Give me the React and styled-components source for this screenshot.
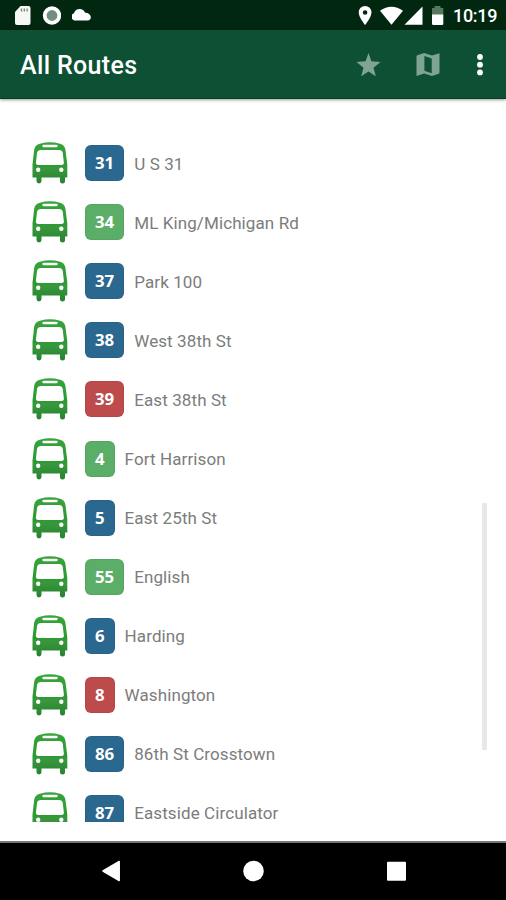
import React from "react";
import styled, { createGlobalStyle } from "styled-components";

const GlobalStyle = createGlobalStyle`
  * { box-sizing: border-box; }
  body { margin: 0; background: #fff; font-family: Roboto, sans-serif; }
  svg { display: block; flex: none; }
`;

const Screen = styled.div`
  width: 506px;
  height: 900px;
  display: flex;
  flex-direction: column;
  overflow: hidden;
  background: #fff;
`;

const StatusBar = styled.div`
  height: 30px;
  flex: none;
  display: flex;
  justify-content: space-between;
  padding: 6px 9px 0 14px;
  background: #022711;
  color: #fff;
`;

const StatusGroup = styled.div`
  display: flex;
  gap: ${(p) => p.$gap}px;
`;

const Clock = styled.time`
  width: 44px;
  font-size: 18px;
  line-height: 20px;
  font-weight: 500;
  letter-spacing: -0.3px;
  white-space: nowrap;
`;

const AppBar = styled.header`
  height: 69px;
  flex: none;
  display: flex;
  align-items: center;
  justify-content: space-between;
  padding: 0 21px 0 20px;
  background: #0e5034;
  border-bottom: 1px solid #0b3a20;
  box-shadow: 0 1px 3px rgba(0, 0, 0, 0.4);
  z-index: 1;
`;

const Title = styled.h1`
  margin: 3px 0 0;
  font-size: 25px;
  line-height: 30px;
  font-weight: 500;
  letter-spacing: 0.35px;
  color: #fff;
`;

const Actions = styled.div`
  display: flex;
  align-items: center;
  gap: 35px;
`;

const IconButton = styled.button`
  border: 0;
  padding: 0;
  background: none;
  color: ${(p) => (p.$active ? "#fff" : "#7fa493")};
  margin: 1px 0 0;
`;

const Content = styled.main`
  height: 742px;
  flex: none;
  display: grid;
  grid-template-columns: 1fr 24px;
  padding-top: 34px;
`;

const RouteList = styled.ul`
  height: 689px;
  margin: 0;
  padding: 0.6px 0 0 32px;
  list-style: none;
  overflow: hidden;
`;

const RouteRow = styled.li`
  height: 59.08px;
  display: flex;
  align-items: center;
`;

const Badge = styled.span`
  height: 36px;
  min-width: 29px;
  margin: 0 10px 0 17px;
  padding: 0 10px;
  display: flex;
  align-items: center;
  justify-content: center;
  border-radius: 6px;
  background: ${(p) => p.$color};
  box-shadow: inset 0 0 0 1px rgba(0, 0, 0, 0.05);
  color: #fff;
  font: 700 16.8px/36px "Open Sans", sans-serif;
`;

const RouteName = styled.span`
  padding-top: 1px;
  font-size: 17px;
  line-height: 22px;
  letter-spacing: 0.1px;
  color: #7c7c7c;
  white-space: nowrap;
`;

const ScrollThumb = styled.div`
  width: 5px;
  height: 247px;
  margin-top: 370px;
  background: #e8e8e8;
`;

const NavBar = styled.nav`
  height: 59px;
  flex: none;
  display: flex;
  justify-content: space-between;
  padding: 16px 99px 0 101px;
  border-top: 2px solid #777;
  background: #000;
`;

const BLUE = "#2b688f";
const GREEN = "#5bae67";
const RED = "#bd4b4c";

const routes = [
  ["31", "U S 31", BLUE],
  ["34", "ML King/Michigan Rd", GREEN],
  ["37", "Park 100", BLUE],
  ["38", "West 38th St", BLUE],
  ["39", "East 38th St", RED],
  ["4", "Fort Harrison", GREEN],
  ["5", "East 25th St", BLUE],
  ["55", "English", GREEN],
  ["6", "Harding", BLUE],
  ["8", "Washington", RED],
  ["86", "86th St Crosstown", BLUE],
  ["87", "Eastside Circulator", BLUE],
];

const BusIcon = () => (
  <svg width="36" height="42" viewBox="0 0 36 42" aria-hidden="true">
    <defs>
      <linearGradient id="busPaint" x1="0" y1="0" x2="0" y2="1">
        <stop offset="0" stopColor="#38a43b" />
        <stop offset="0.55" stopColor="#2b9a30" />
        <stop offset="0.62" stopColor="#39983d" />
        <stop offset="1" stopColor="#278230" />
      </linearGradient>
    </defs>
    <path
      fill="url(#busPaint)"
      fillRule="evenodd"
      d="M8 1.7Q18-1 28 1.7Q32.6 3 33.4 7.5L35.3 22.5V35.5H33V39A2.5 2.5 0 0 1 28 39V35.5H9.5V39A2.5 2.5 0 0 1 4.5 39V35.5H.5V22.5L2.2 7.5Q3 3 8 1.7ZM11.8 2.7Q10.3 2.7 10.3 4T11.8 5.3H24.2Q25.7 5.3 25.7 4T24.2 2.7ZM8.3 8Q5.5 8 5.1 10.5L3.9 20.8Q3.7 23 6.3 23H29.6Q32.1 23 31.9 20.8L30.7 10.5Q30.2 8 27.6 8ZM6.2 25.5A2.2 2.2 0 1 0 6.2 29.9A2.2 2.2 0 1 0 6.2 25.5ZM29.3 25.5A2.2 2.2 0 1 0 29.3 29.9A2.2 2.2 0 1 0 29.3 25.5Z"
    />
  </svg>
);

export default function App() {
  return (
    <Screen>
      <GlobalStyle />
      <StatusBar>
        <StatusGroup $gap={11}>
          <svg width="17" height="19" viewBox="0 0 17 19">
            <path fill="#f5f8f5" d="M6.5 0H14.5Q16.5 0 16.5 2V17Q16.5 19 14.5 19H3Q1 19 1 17V6Z" />
            <path stroke="#6e8474" strokeWidth="1.3" d="M7.5 2.5V5.5M10.3 2.5V5.5M13.1 2.5V5.5" />
          </svg>
          <svg width="19" height="19" viewBox="-0.5 0 19 19">
            <circle cx="9.5" cy="9.5" r="7.3" fill="#708f80" stroke="#fff" strokeWidth="3.8" />
          </svg>
          <svg width="21" height="19" viewBox="1.5 0 21 19">
            <path fill="#fff" d="M4 14.5A3.8 3.8 0 0 1 3.5 7.2Q5 3 9 3Q13.2 3 14.7 6.8Q19.6 7 20.3 11Q20.5 14.5 17 14.5Z" />
          </svg>
        </StatusGroup>
        <StatusGroup $gap={0}>
          <svg width="95" height="20" viewBox="-0.5 0 95 20" fill="#fff">
            <path fillRule="evenodd" d="M6.6 0A6.4 6.4 0 0 0 .2 6.4C.2 11 6.6 19 6.6 19S13 11 13 6.4A6.4 6.4 0 0 0 6.6 0ZM6.6 4.2A2.3 2.3 0 1 1 6.6 8.8A2.3 2.3 0 1 1 6.6 4.2Z" />
            <path d="M21.5 4.8Q33-3.4 44.5 4.8L33 18.8Z" />
            <path d="M64 .5V18.8H46Z" />
            <path fill="#55785f" d="M73.5 2H76V0H82V2H84.8V9H73.5Z" />
            <path d="M73.5 8.5H84.8V17.7Q84.8 19 83.5 19H74.8Q73.5 19 73.5 17.7Z" />
          </svg>
          <Clock>10:19</Clock>
        </StatusGroup>
      </StatusBar>
      <AppBar>
        <Title>All Routes</Title>
        <Actions>
          <IconButton aria-label="Favorites">
            <svg width="25" height="24" viewBox="0 0 25 24" fill="currentColor">
              <path d="M12.5 0L15.4 8.2L24.5 8.9L17.5 14.7L19.8 23.2L12.5 18.4L5.2 23.2L7.5 14.7L.5 8.9L9.6 8.2Z" />
            </svg>
          </IconButton>
          <IconButton aria-label="Map">
            <svg width="24" height="24" viewBox="0 0 24 24" fill="currentColor">
              <path fillRule="evenodd" d="M.5 3.3Q.5 2.5 1.3 2.2L8.2 0L16 2.6L22.7.4Q23.5.1 23.5 1V19.6Q23.5 20.4 22.7 20.7L16 23L8.2 20.4L1.3 22.8Q.5 23.1.5 22.2ZM8.4 3V17.8L15.7 20.3V5.5Z" />
            </svg>
          </IconButton>
          <IconButton aria-label="More options" $active>
            <svg width="10" height="24" viewBox="0 0 10 24" fill="currentColor">
              <circle cx="5" cy="4" r="2.9" />
              <circle cx="5" cy="11.7" r="2.9" />
              <circle cx="5" cy="19.4" r="2.9" />
            </svg>
          </IconButton>
        </Actions>
      </AppBar>
      <Content>
        <RouteList>
          {routes.map(([number, name, color]) => (
            <RouteRow key={number}>
              <BusIcon />
              <Badge $color={color}>{number}</Badge>
              <RouteName>{name}</RouteName>
            </RouteRow>
          ))}
        </RouteList>
        <ScrollThumb />
      </Content>
      <NavBar>
        <svg width="20" height="24" viewBox="0 0 20 24">
          <path fill="#fff" stroke="#fff" strokeWidth="1.5" strokeLinejoin="round" d="M2 12L18.2 2.5V21.5Z" />
        </svg>
        <svg width="22" height="24" viewBox="0.5 0 22 24">
          <circle cx="11" cy="12" r="10.3" fill="#fff" />
        </svg>
        <svg width="20" height="24" viewBox="0 0 20 24">
          <rect x="0" y="2.7" width="19" height="19" rx="1" fill="#fff" />
        </svg>
      </NavBar>
    </Screen>
  );
}
